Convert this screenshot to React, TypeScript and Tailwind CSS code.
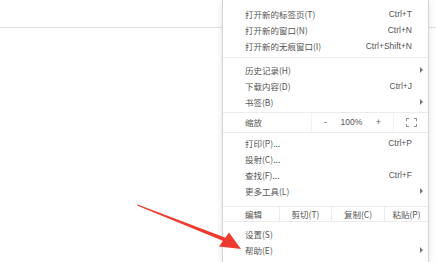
import React from 'react';

type Item = { label: string; shortcut?: string; sub?: boolean };

const font = { fontFamily: '"Noto Sans CJK SC", "Liberation Sans", sans-serif' };

const Row: React.FC<Item> = ({ label, shortcut, sub }) => (
  <div className="relative flex h-[16px] items-center justify-between pl-[22px] pr-[16px] text-[8.5px] text-[#555]">
    <span>{label}</span>
    {shortcut && <span className="font-['Liberation_Sans',sans-serif] text-[8.5px]">{shortcut}</span>}
    {sub && (
      <span className="absolute right-[5px] top-[5px] h-0 w-0 border-y-[3px] border-l-[3px] border-y-transparent border-l-[#777]" />
    )}
  </div>
);

const groupA: Item[] = [
  { label: '打开新的标签页(T)', shortcut: 'Ctrl+T' },
  { label: '打开新的窗口(N)', shortcut: 'Ctrl+N' },
  { label: '打开新的无痕窗口(I)', shortcut: 'Ctrl+Shift+N' },
];
const groupB: Item[] = [
  { label: '历史记录(H)', sub: true },
  { label: '下载内容(D)', shortcut: 'Ctrl+J' },
  { label: '书签(B)', sub: true },
];
const groupC: Item[] = [
  { label: '打印(P)...', shortcut: 'Ctrl+P' },
  { label: '投射(C)...' },
  { label: '查找(F)...', shortcut: 'Ctrl+F' },
  { label: '更多工具(L)', sub: true },
];
const groupD: Item[] = [
  { label: '设置(S)' },
  { label: '帮助(E)', sub: true },
];

export default function App() {
  return (
    <div className="relative h-[262px] w-[436px] overflow-hidden bg-white" style={font}>
      {/* page behind */}
      <div className="h-[28px] border-b border-[#dedede] bg-white" />
      <div className="absolute left-[339px] top-0 h-[3px] w-[5px] bg-[#e05050]" />
      <div className="absolute left-[413px] top-0 h-[2px] w-[8px] bg-[#d8d8d8]" />

      {/* chrome menu */}
      <div className="absolute left-[222px] top-0 flex h-[262px] w-[207px] flex-col border-x border-[#d4d4d4] bg-white pt-[6px] shadow-[0_2px_6px_rgba(0,0,0,0.12)]">
        {groupA.map(i => <Row key={i.label} {...i} />)}
        <div className="mb-[4px] mt-[3px] h-px bg-[#ececec]" />
        {groupB.map(i => <Row key={i.label} {...i} />)}

        <div className="mt-[2px] flex h-[21px] items-center border-y border-[#ececec] text-[8.5px] text-[#555]">
          <span className="w-[88px] pl-[22px]">缩放</span>
          <div className="flex h-full w-[83px] items-center justify-between border-x border-[#f2f2f2] px-[12px] font-['Liberation_Sans',sans-serif]">
            <span>-</span>
            <span>100%</span>
            <span>+</span>
          </div>
          <div className="flex flex-1 items-center justify-center">
            <svg width="11" height="9" viewBox="0 0 11 9" fill="none" stroke="#888" strokeWidth="1">
              <path d="M0.5 3V0.5H3M8 0.5H10.5V3M10.5 6V8.5H8M3 8.5H0.5V6" />
            </svg>
          </div>
        </div>

        <div className="h-[2px]" />
        {groupC.map(i => <Row key={i.label} {...i} />)}

        <div className="mt-[7px] flex h-[16px] items-center border-y border-[#ececec] text-[8.5px] text-[#555]">
          <span className="w-[56px] pl-[22px]">编辑</span>
          <span className="flex h-full w-[52px] items-center justify-center border-l border-[#ececec]">剪切(T)</span>
          <span className="flex h-full w-[53px] items-center justify-center border-l border-[#ececec]">复制(C)</span>
          <span className="flex h-full flex-1 items-center justify-center border-l border-[#ececec]">粘贴(P)</span>
        </div>

        <div className="h-[4px]" />
        {groupD.map(i => <Row key={i.label} {...i} />)}
      </div>

      {/* red annotation arrow */}
      <svg className="absolute left-0 top-0" width="436" height="262" viewBox="0 0 436 262">
        <path d="M137 204.3 L137.6 205.7 L227 242.5 L225 237.5 Z" fill="#ee3b2f" />
        <path d="M241 249 L219 246.5 L229 232.5 Z" fill="#ee3b2f" />
      </svg>
    </div>
  );
}
